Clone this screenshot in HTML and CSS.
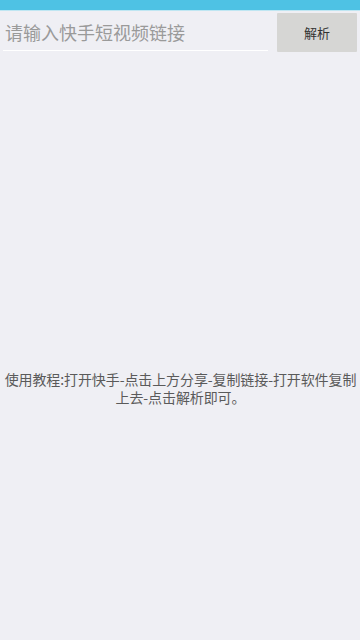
FILE: index.html
```html
<!DOCTYPE html>
<html>
<head>
    <meta charset="UTF-8">
    <title>快手解析</title>
    <link rel="stylesheet" href="styles.css">
</head>
<body>
    <div class="status-bar"></div>
    <div class="search-row">
        <input type="text" class="link-input" placeholder="请输入快手短视频链接">
        <button class="parse-btn">解析</button>
    </div>
    <div class="content">
        <p class="tip">使用教程:打开快手-点击上方分享-复制链接-打开软件复制上去-点击解析即可。</p>
    </div>
</body>
</html>
```

FILE: styles.css
```css
html, body{
    height: 100%;
}
body{
    margin: 0;
    background-color: #efeff4;
    font-family: "Noto Sans CJK SC", "Noto Sans", sans-serif;
    display: flex;
    flex-direction: column;
}
p{margin: 0;}

.status-bar{
    height: 10px;
    background-color: #4ec2e4;
    border-bottom: 1px solid #bfe6f2;
}

.search-row{
    display: flex;
    align-items: flex-start;
    padding: 2px 3px 0 3px;
}
.link-input{
    flex: 1;
    height: 37px;
    margin-right: 9px;
    padding: 0 2px;
    border: none;
    border-bottom: 1px solid #ffffff;
    background: transparent;
    font-family: inherit;
    font-size: 18px;
    color: #333333;
    outline: none;
}
.link-input::placeholder{
    color: #9a9a9a;
}
.parse-btn{
    width: 80px;
    height: 39px;
    border: none;
    border-radius: 1px;
    background-color: #d6d6d4;
    font-family: inherit;
    font-size: 13px;
    color: #333333;
}

.content{
    flex: 1;
    display: flex;
    align-items: center;
    padding: 0 1px 0 2px;
}
.tip{
    width: 100%;
    text-align: center;
    font-size: 14px;
    line-height: 18px;
    letter-spacing: -0.1px;
    color: #5a5a5a;
    margin-top: 84px;
}
```
